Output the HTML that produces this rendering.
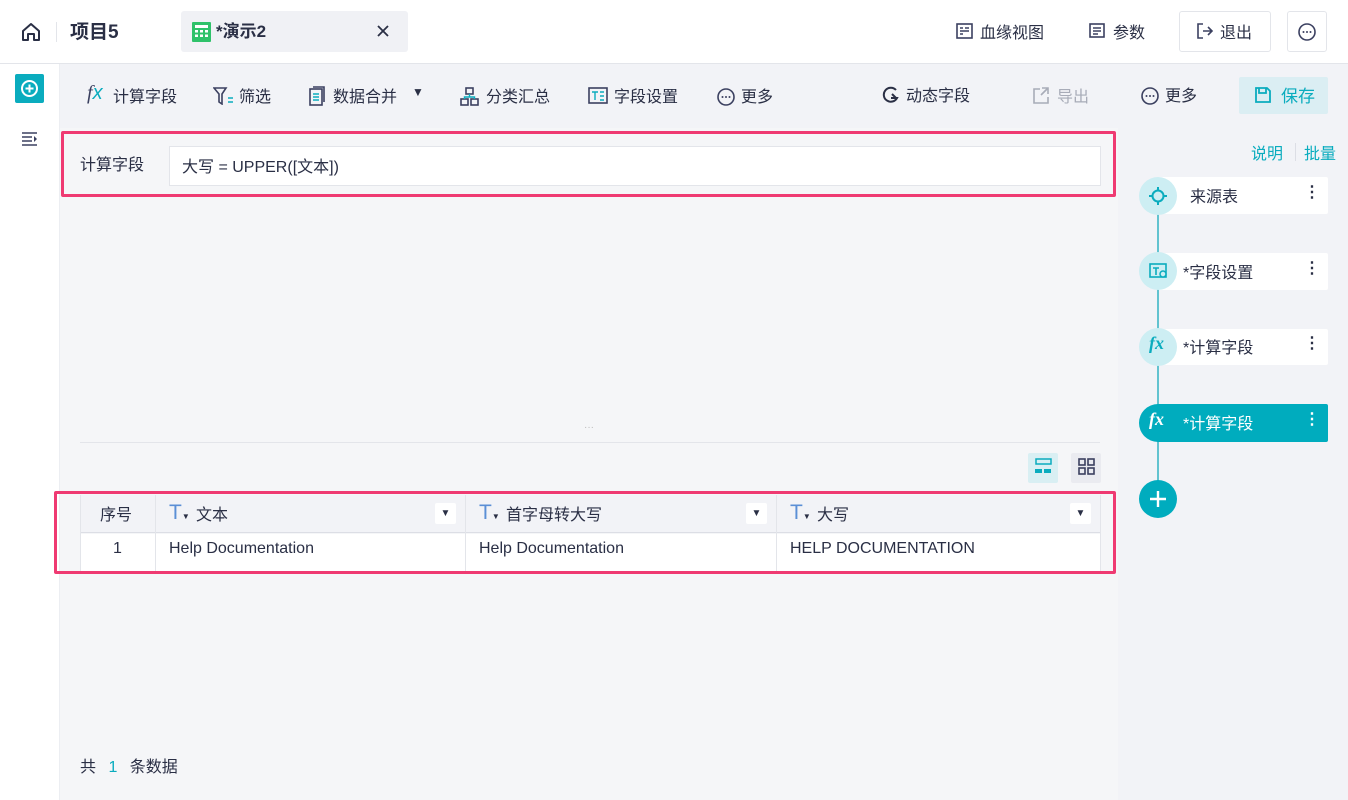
<!DOCTYPE html><html><head><meta charset="utf-8"><style>
*{box-sizing:border-box;margin:0;padding:0}
body{width:1348px;height:800px;overflow:hidden;background:#fff;font-family:"Liberation Sans","Noto Sans CJK SC",sans-serif;color:#2a2f45;font-size:16px;position:relative}
.a{position:absolute}
.t{position:absolute;white-space:nowrap;transform:translateY(-3px)}
svg{display:block}
.ic{stroke:#3b4060;fill:none;stroke-width:1.6}
</style></head><body>
<!-- header -->
<div class="a" style="left:0;top:0;width:1348px;height:64px;border-bottom:1px solid #e3e5ea;background:#fff"></div>
<svg class="a" style="left:20px;top:21px" width="22" height="22" viewBox="0 0 22 22"><path d="M3 10L11 3L19 10V19H14V13H8V19H3Z" stroke="#2a2f45" stroke-width="2" fill="none" stroke-linejoin="round"/></svg>
<div class="a" style="left:56px;top:22px;width:1px;height:20px;background:#e3e5ea"></div>
<div class="t" style="left:70px;top:20px;font-size:19px;font-weight:bold">项目5</div>
<div class="a" style="left:181px;top:11px;width:227px;height:41px;background:#f0f1f5;border-radius:3px"></div>
<svg class="a" style="left:192px;top:22px" width="19" height="20" viewBox="0 0 19 20"><rect width="19" height="20" rx="1" fill="#2fc26a"/><g fill="#fff"><rect x="3" y="3" width="13" height="3"/><rect x="3" y="8" width="3" height="2.5"/><rect x="8" y="8" width="3" height="2.5"/><rect x="13" y="8" width="3" height="2.5"/><rect x="3" y="12.5" width="3" height="2.5"/><rect x="8" y="12.5" width="3" height="2.5"/><rect x="13" y="12.5" width="3" height="2.5"/></g></svg>
<div class="t" style="left:216px;top:20px;font-size:17px;font-weight:bold">*演示2</div>
<svg class="a" style="left:377px;top:25px" width="12" height="12"><path d="M1 1L11 11M11 1L1 11" stroke="#2a2f45" stroke-width="1.8"/></svg>
<svg class="a" style="left:956px;top:23px" width="17" height="16"><rect x="1" y="1" width="15" height="14" class="ic"/><path d="M4 5h3M4 8h9M4 11h3M9 5h4" class="ic"/></svg>
<div class="t" style="left:980px;top:22px">血缘视图</div>
<svg class="a" style="left:1089px;top:23px" width="16" height="15"><rect x="1" y="1" width="14" height="13" class="ic"/><path d="M4 5h8M4 8h8M4 11h5" class="ic"/></svg>
<div class="t" style="left:1113px;top:22px">参数</div>
<div class="a" style="left:1179px;top:11px;width:92px;height:41px;border:1px solid #e3e5ea;border-radius:3px"></div>
<svg class="a" style="left:1196px;top:22px" width="18" height="18"><path d="M7 2H2V16H7M7 9H16M12 5L16 9L12 13" class="ic"/></svg>
<div class="t" style="left:1220px;top:22px">退出</div>
<div class="a" style="left:1287px;top:11px;width:40px;height:41px;border:1px solid #e3e5ea;border-radius:3px"></div>
<svg class="a" style="left:1297px;top:22px" width="20" height="20"><circle cx="10" cy="10" r="8" class="ic"/><circle cx="6.5" cy="10" r="1" fill="#3b4060"/><circle cx="10" cy="10" r="1" fill="#3b4060"/><circle cx="13.5" cy="10" r="1" fill="#3b4060"/></svg>
<!-- sidebar -->
<div class="a" style="left:0;top:64px;width:60px;height:736px;background:#fff;border-right:1px solid #eceef2"></div>
<div class="a" style="left:15px;top:74px;width:29px;height:29px;background:#0aacbe;border-radius:2px"></div>
<svg class="a" style="left:20px;top:79px" width="19" height="19"><circle cx="9.5" cy="9.5" r="7.5" stroke="#fff" stroke-width="2" fill="none"/><path d="M9.5 5.5v8M5.5 9.5h8" stroke="#fff" stroke-width="2"/></svg>
<svg class="a" style="left:22px;top:131px" width="17" height="15"><path d="M0 2h15M0 6h10M0 10h10M0 14h15" stroke="#3b4060" stroke-width="1.6"/><path d="M12 5l3 3-3 3z" fill="#3b4060"/></svg>
<!-- main -->
<div class="a" style="left:60px;top:64px;width:1288px;height:736px;background:#f5f6f8"></div>
<div class="a" style="left:60px;top:64px;width:1288px;height:64px;background:#f2f3f7"></div>
<div class="a" style="left:1118px;top:128px;width:230px;height:672px;background:#f2f3f7"></div>
<div class="t" style="left:87px;top:85px;font-size:20px;font-style:italic;font-family:'Liberation Serif',serif;color:#3b4060">f<span style="color:#0aacbe;font-family:'Liberation Sans'">x</span></div>
<div class="t" style="left:113px;top:86px">计算字段</div>
<svg class="a" style="left:213px;top:87px" width="22" height="18"><path d="M1 1h12L9 7v10l-3-2V7Z" class="ic"/><path d="M15 11h5M15 15h5" stroke="#0aacbe" stroke-width="1.6"/></svg>
<div class="t" style="left:239px;top:86px">筛选</div>
<svg class="a" style="left:309px;top:86px" width="16" height="20"><rect x="1" y="3" width="12" height="16" class="ic"/><path d="M4 1h11v15" class="ic"/><path d="M4 8h6M4 11h6M4 14h6" stroke="#0aacbe" stroke-width="1.4"/></svg>
<div class="t" style="left:333px;top:86px">数据合并</div>
<div class="t" style="left:412px;top:88px;font-size:12px">▼</div>
<svg class="a" style="left:460px;top:87px" width="19" height="19"><rect x="6" y="1" width="7" height="6" class="ic"/><rect x="1" y="12" width="7" height="6" class="ic"/><rect x="11" y="12" width="7" height="6" class="ic"/><path d="M9.5 7v3M4.5 12v-2h10v2" stroke="#0aacbe" stroke-width="1.4" fill="none"/></svg>
<div class="t" style="left:486px;top:86px">分类汇总</div>
<svg class="a" style="left:588px;top:87px" width="20" height="17"><rect x="1" y="1" width="18" height="15" class="ic"/><path d="M4 5h6M7 5v8M12 5h4M12 9h4M12 13h4" stroke="#0aacbe" stroke-width="1.4"/></svg>
<div class="t" style="left:614px;top:86px">字段设置</div>
<svg class="a" style="left:716px;top:87px" width="20" height="20"><circle cx="10" cy="10" r="8" class="ic"/><circle cx="6.5" cy="10" r="1" fill="#3b4060"/><circle cx="10" cy="10" r="1" fill="#3b4060"/><circle cx="13.5" cy="10" r="1" fill="#3b4060"/></svg>
<div class="t" style="left:741px;top:86px">更多</div>
<svg class="a" style="left:882px;top:86px" width="18" height="18"><path d="M14 4A7 7 0 1 0 15 12H9" stroke="#2a2f45" stroke-width="2" fill="none"/><path d="M10 8l4 4" stroke="#2a2f45" stroke-width="2"/></svg>
<div class="t" style="left:906px;top:85px">动态字段</div>
<svg class="a" style="left:1033px;top:87px" width="17" height="17"><path d="M7 2H1V16H15V10M9 1h6v6M15 1L8 8" stroke="#a8acb8" stroke-width="1.6" fill="none"/></svg>
<div class="t" style="left:1057px;top:86px;color:#a8acb8">导出</div>
<svg class="a" style="left:1140px;top:86px" width="20" height="20"><circle cx="10" cy="10" r="8" class="ic"/><circle cx="6.5" cy="10" r="1" fill="#3b4060"/><circle cx="10" cy="10" r="1" fill="#3b4060"/><circle cx="13.5" cy="10" r="1" fill="#3b4060"/></svg>
<div class="t" style="left:1165px;top:85px">更多</div>
<div class="a" style="left:1239px;top:77px;width:89px;height:37px;background:#dbeef3;border-radius:2px"></div>
<svg class="a" style="left:1255px;top:87px" width="16" height="16"><path d="M1 1h11l3 3v11H1Z M4 1v5h7V1" stroke="#0aacbe" stroke-width="1.8" fill="none"/></svg>
<div class="t" style="left:1281px;top:85px;color:#0aacbe;font-size:17px">保存</div>
<!-- formula -->
<div class="a" style="left:61px;top:131px;width:1055px;height:66px;border:3px solid #ef3a72;border-radius:2px;background:#f5f6f8"></div>
<div class="t" style="left:80px;top:154px">计算字段</div>
<div class="a" style="left:169px;top:146px;width:932px;height:40px;background:#fff;border:1px solid #e3e5ea"></div>
<div class="t" style="left:182px;top:156px">大写 = UPPER([文本])</div>
<!-- separator -->
<div class="t" style="left:584px;top:425px;font-size:10px;color:#bbb">···</div>
<div class="a" style="left:80px;top:442px;width:1020px;height:1px;background:#e3e5ea"></div>
<div class="a" style="left:1028px;top:453px;width:30px;height:30px;background:#d9eff3;border-radius:2px"></div>
<svg class="a" style="left:1035px;top:458px" width="17" height="17"><rect x="1" y="1" width="15" height="5" stroke="#0aacbe" stroke-width="1.5" fill="none"/><rect x="0" y="11" width="7" height="4" fill="#0aacbe"/><rect x="9" y="11" width="7" height="4" fill="#0aacbe"/></svg>
<div class="a" style="left:1071px;top:453px;width:30px;height:30px;background:#eaebf0;border-radius:2px"></div>
<svg class="a" style="left:1078px;top:458px" width="17" height="17"><rect x="1" y="1" width="6" height="6" stroke="#3b4060" stroke-width="1.6" fill="none"/><rect x="10" y="1" width="6" height="6" stroke="#3b4060" stroke-width="1.6" fill="none"/><rect x="1" y="10" width="6" height="6" stroke="#3b4060" stroke-width="1.6" fill="none"/><rect x="10" y="10" width="6" height="6" stroke="#3b4060" stroke-width="1.6" fill="none"/></svg>
<!-- table -->
<div class="a" style="left:54px;top:491px;width:1062px;height:83px;border:3px solid #ef3a72;border-radius:2px"></div>
<div class="a" style="left:80px;top:495px;width:1020px;height:38px;background:#f2f3f7;border-bottom:1px solid #dcdee5"></div>
<div class="a" style="left:80px;top:534px;width:1020px;height:37px;background:#fff"></div>
<div class="a" style="left:80px;top:495px;width:1px;height:76px;background:#e3e5ea"></div>
<div class="a" style="left:155px;top:495px;width:1px;height:76px;background:#e3e5ea"></div>
<div class="a" style="left:465px;top:495px;width:1px;height:76px;background:#e3e5ea"></div>
<div class="a" style="left:776px;top:495px;width:1px;height:76px;background:#e3e5ea"></div>
<div class="a" style="left:1100px;top:495px;width:1px;height:76px;background:#e3e5ea"></div>
<div class="t" style="left:100px;top:504px">序号</div>
<div class="t" style="left:113px;top:543px">1</div>
<div class="t" style="left:169px;top:504px;color:#5b8fd6;font-size:21px">T<span style="font-size:8px;color:#2a2f45">▼</span></div>
<div class="t" style="left:196px;top:504px">文本</div>
<div class="a" style="left:435px;top:503px;width:21px;height:21px;background:#fff;border-radius:2px;font-size:10px;text-align:center;line-height:21px">▼</div>
<div class="t" style="left:479px;top:504px;color:#5b8fd6;font-size:21px">T<span style="font-size:8px;color:#2a2f45">▼</span></div>
<div class="t" style="left:506px;top:504px">首字母转大写</div>
<div class="a" style="left:746px;top:503px;width:21px;height:21px;background:#fff;border-radius:2px;font-size:10px;text-align:center;line-height:21px">▼</div>
<div class="t" style="left:790px;top:504px;color:#5b8fd6;font-size:21px">T<span style="font-size:8px;color:#2a2f45">▼</span></div>
<div class="t" style="left:817px;top:504px">大写</div>
<div class="a" style="left:1070px;top:503px;width:21px;height:21px;background:#fff;border-radius:2px;font-size:10px;text-align:center;line-height:21px">▼</div>
<div class="t" style="left:169px;top:543px">Help Documentation</div>
<div class="t" style="left:479px;top:543px">Help Documentation</div>
<div class="t" style="left:790px;top:543px">HELP DOCUMENTATION</div>
<div class="t" style="left:80px;top:756px">共 <span style="color:#0aacbe;margin:0 8px">1</span> 条数据</div>
<!-- right panel -->
<div class="t" style="left:1251px;top:143px;color:#0aacbe">说明</div>
<div class="a" style="left:1295px;top:143px;width:1px;height:18px;background:#dcdee5"></div>
<div class="t" style="left:1304px;top:143px;color:#0aacbe">批量</div>
<div class="a" style="left:1157px;top:200px;width:2px;height:300px;background:#62c3d0"></div>
<div class="a" style="left:1158px;top:177px;width:170px;height:37px;background:#fff;border-radius:2px"></div>
<div class="a" style="left:1139px;top:177px;width:38px;height:38px;border-radius:50%;background:#cdeef3"></div>
<svg class="a" style="left:1149px;top:187px" width="18" height="18"><circle cx="9" cy="9" r="5.5" stroke="#0aacbe" stroke-width="2" fill="none"/><path d="M9 0v4M9 14v4M0 9h4M14 9h4" stroke="#0aacbe" stroke-width="2"/></svg>
<div class="t" style="left:1190px;top:186px">来源表</div>
<div class="t" style="left:1304px;top:185px;font-weight:bold">⋮</div>
<div class="a" style="left:1158px;top:253px;width:170px;height:37px;background:#fff;border-radius:2px"></div>
<div class="a" style="left:1139px;top:252px;width:38px;height:38px;border-radius:50%;background:#cdeef3"></div>
<svg class="a" style="left:1149px;top:263px" width="19" height="16"><rect x="1" y="1" width="16" height="13" stroke="#0aacbe" stroke-width="1.6" fill="none"/><path d="M4 5h6M7 5v7" stroke="#0aacbe" stroke-width="1.6"/><circle cx="14" cy="11" r="3" stroke="#0aacbe" stroke-width="1.5" fill="#cdeef3"/></svg>
<div class="t" style="left:1183px;top:262px">*字段设置</div>
<div class="t" style="left:1304px;top:261px;font-weight:bold">⋮</div>
<div class="a" style="left:1158px;top:329px;width:170px;height:36px;background:#fff;border-radius:2px"></div>
<div class="a" style="left:1139px;top:328px;width:38px;height:38px;border-radius:50%;background:#cdeef3"></div>
<div class="t" style="left:1149px;top:336px;font-style:italic;font-weight:bold;color:#0aacbe;font-family:'Liberation Serif',serif;font-size:18px">fx</div>
<div class="t" style="left:1183px;top:337px">*计算字段</div>
<div class="t" style="left:1304px;top:336px;font-weight:bold">⋮</div>
<div class="a" style="left:1139px;top:404px;width:189px;height:38px;background:#00acbe;border-radius:19px 2px 2px 19px"></div>
<div class="t" style="left:1149px;top:412px;font-style:italic;font-weight:bold;color:#fff;font-family:'Liberation Serif',serif;font-size:18px">fx</div>
<div class="t" style="left:1183px;top:413px;color:#fff">*计算字段</div>
<div class="t" style="left:1304px;top:412px;font-weight:bold;color:#fff">⋮</div>
<div class="a" style="left:1139px;top:480px;width:38px;height:38px;border-radius:50%;background:#00acbe"></div>
<svg class="a" style="left:1149px;top:490px" width="18" height="18"><path d="M9 1v16M1 9h16" stroke="#fff" stroke-width="2.4"/></svg>
</body></html>
